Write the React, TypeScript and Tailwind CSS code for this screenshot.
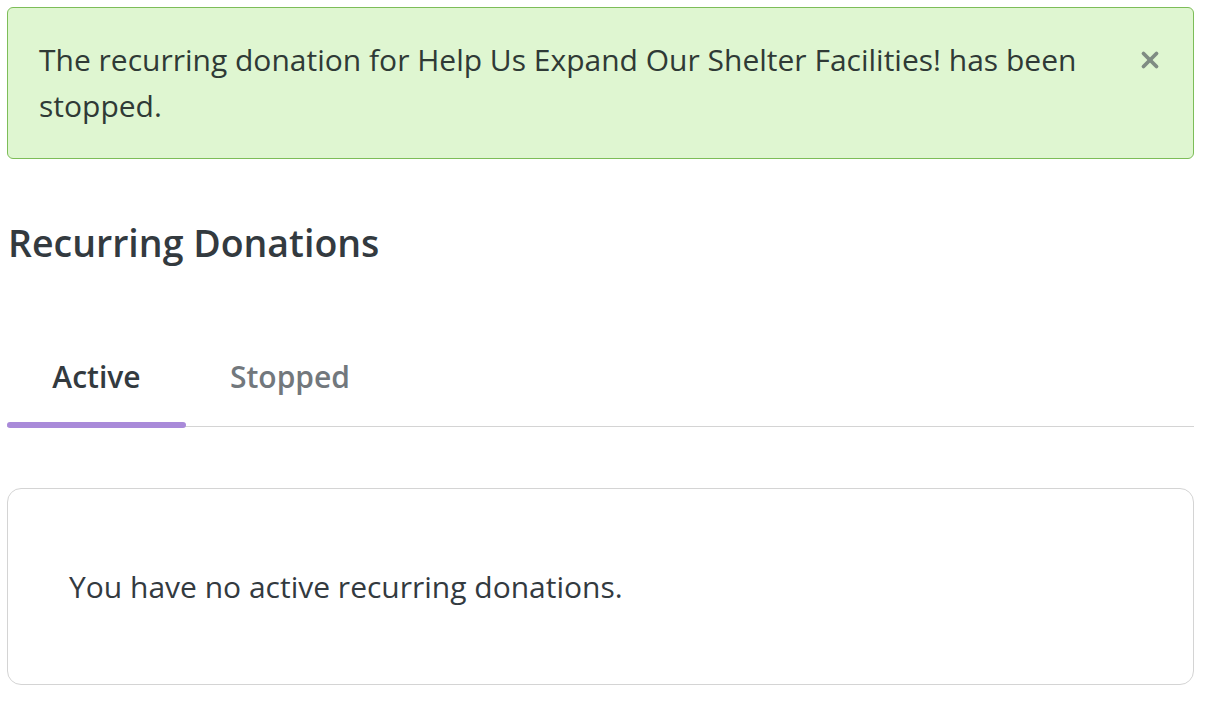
import { X } from "lucide-react";

export default function App() {
  return (
    <div
      className="min-h-[703px] bg-white pt-[7px] pl-[7px] text-[#333a3f]"
      style={{ fontFamily: '"Open Sans", "Noto Sans", sans-serif' }}
    >
      <div className="w-[1187px]">
        {/* Alert */}
        <div className="flex items-start justify-between rounded-[6px] border border-[#7dbd58] bg-[#dff6d1] pt-[29px] pb-[29px] pl-[31px] pr-[30px]">
          <p className="w-[1060px] text-[30px] leading-[46px] text-[#2f3a36]">
            The recurring donation for Help Us Expand Our Shelter Facilities! has been stopped.
          </p>
          <button className="mt-[10px] text-[#7f8c83]">
            <X size={26} strokeWidth={3.5} />
          </button>
        </div>

        {/* Heading */}
        <h1 className="mt-[59px] pl-px text-[37.5px] font-semibold leading-[50px] text-[#333a3f]">
          Recurring Donations
        </h1>

        {/* Tabs */}
        <div className="mt-[89px] flex border-b border-[#d4d4d4]">
          <div className="relative w-[179px] pb-[29px] text-center text-[30px] font-semibold leading-[40px] text-[#333a3f]">
            Active
            <span className="absolute bottom-[-2px] left-0 h-[6px] w-full rounded-full bg-[#a98ad9]" />
          </div>
          <div className="w-[208px] pb-[29px] text-center text-[30px] font-semibold leading-[40px] text-[#72787d]">
            Stopped
          </div>
        </div>

        {/* Empty card */}
        <div className="mt-[61px] flex h-[197px] items-center rounded-[14px] border border-[#d4d4d4] pl-[61px]">
          <p className="text-[30px] leading-[40px] text-[#333a3f]">
            You have no active recurring donations.
          </p>
        </div>
      </div>
    </div>
  );
}
